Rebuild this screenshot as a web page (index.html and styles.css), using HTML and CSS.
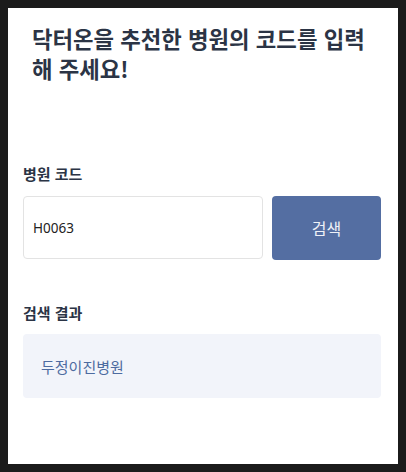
FILE: index.html
```html
<!DOCTYPE html>
<html lang="ko">
<head>
<meta charset="utf-8">
<link rel="stylesheet" href="styles.css">
</head>
<body>
<main class="page">
  <h1 class="title">닥터온을 추천한 병원의 코드를 입력 해 주세요!</h1>
  <section class="field">
    <h2 class="label">병원 코드</h2>
    <div class="search-row">
      <div class="input">H0063</div>
      <button class="btn" type="button">검색</button>
    </div>
  </section>
  <section class="result-section">
    <h2 class="label">검색 결과</h2>
    <div class="result">두정이진병원</div>
  </section>
</main>
</body>
</html>
```
FILE: styles.css
```css
html {
  background: #1b1b1b;
}
body {
  margin: 8px;
  background: #ffffff;
  height: 456px;
  font-family: "Noto Sans CJK KR", "Noto Sans", sans-serif;
  color: #2b3445;
}
.page {
  padding: 15px 17px 0 15px;
}
.title {
  margin: 0 0 0 9px;
  font-size: 22.3px;
  line-height: 30px;
  font-weight: 700;
  color: #2b3445;
}
.field {
  margin-top: 80px;
}
.label {
  margin: 0;
  font-size: 15px;
  line-height: 22px;
  font-weight: 700;
  color: #2b3445;
}
.search-row {
  display: flex;
  gap: 9px;
  margin-top: 11px;
}
.input {
  box-sizing: border-box;
  width: 240px;
  height: 63px;
  border: 1px solid #e3e3e3;
  border-radius: 4px;
  padding: 0 9px;
  display: flex;
  align-items: center;
  font-family: "Noto Sans", sans-serif;
  font-size: 13.5px;
  color: #222;
}
.btn {
  flex: 1;
  height: 64px;
  border: none;
  border-radius: 4px;
  background: #546ea2;
  color: #eef1f7;
  font-family: "Noto Sans CJK KR", sans-serif;
  font-size: 16px;
  padding: 0;
}
.result-section {
  margin-top: 42px;
}
.result {
  margin-top: 10px;
  height: 64px;
  box-sizing: border-box;
  background: #f2f4fa;
  border-radius: 4px;
  padding: 0 18px;
  display: flex;
  align-items: center;
  font-size: 15px;
  color: #4d6ba0;
}
```
